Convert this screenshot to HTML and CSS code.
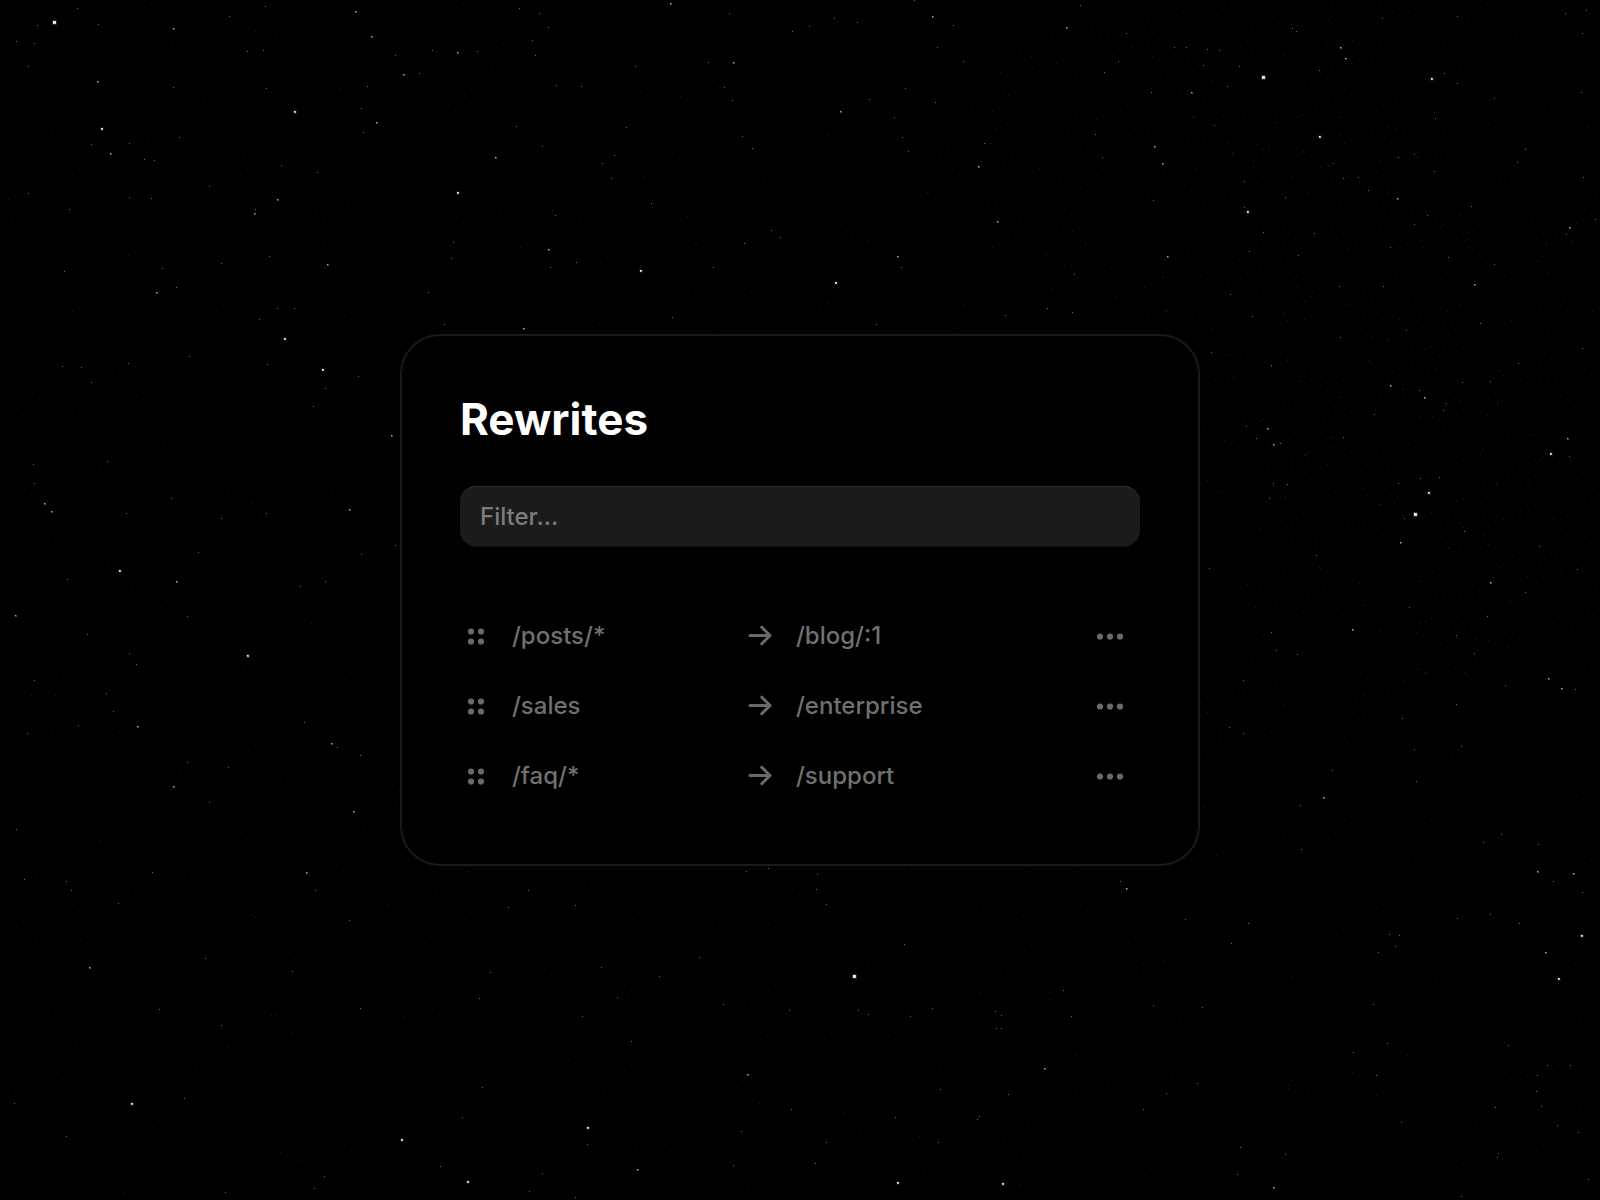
FILE: index.html
```html
<!DOCTYPE html>
<html lang="en">
<head>
    <meta charset="UTF-8">
    <meta name="viewport" content="width=device-width, initial-scale=1.0">
    <title>Rewrites</title>
    <link rel="stylesheet" href="styles.css">
</head>
<body>
    <svg class="sky" id="sky" viewBox="0 0 1600 1200" preserveAspectRatio="xMidYMid slice" aria-hidden="true"></svg>

    <!-- Shared icons -->
    <svg class="icon-defs" aria-hidden="true">
        <symbol id="icon-grip" viewBox="0 0 32 32">
            <circle cx="11" cy="11.5" r="3.1"/>
            <circle cx="21" cy="11.5" r="3.1"/>
            <circle cx="11" cy="21.5" r="3.1"/>
            <circle cx="21" cy="21.5" r="3.1"/>
        </symbol>
        <symbol id="icon-arrow" viewBox="0 0 32 32">
            <path d="M6 15.5H26M17.8 7.2L26 15.5L17.8 23.8" fill="none" stroke="currentColor" stroke-width="3" stroke-linecap="round" stroke-linejoin="round"/>
        </symbol>
        <symbol id="icon-more" viewBox="0 0 32 32">
            <circle cx="6" cy="16.5" r="3.1"/>
            <circle cx="16" cy="16.5" r="3.1"/>
            <circle cx="26" cy="16.5" r="3.1"/>
        </symbol>
    </svg>

    <main class="card">
        <h1 class="title">Rewrites</h1>
        <input class="filter" type="text" placeholder="Filter..." aria-label="Filter">

        <ul class="rewrites">
            <li class="rewrite">
                <button class="grip" type="button" aria-label="Reorder"><svg class="icon"><use href="#icon-grip"/></svg></button>
                <span class="path">/posts/*</span>
                <svg class="icon" aria-hidden="true"><use href="#icon-arrow"/></svg>
                <span class="path">/blog/:1</span>
                <button class="more" type="button" aria-label="More"><svg class="icon"><use href="#icon-more"/></svg></button>
            </li>
            <li class="rewrite">
                <button class="grip" type="button" aria-label="Reorder"><svg class="icon"><use href="#icon-grip"/></svg></button>
                <span class="path">/sales</span>
                <svg class="icon" aria-hidden="true"><use href="#icon-arrow"/></svg>
                <span class="path">/enterprise</span>
                <button class="more" type="button" aria-label="More"><svg class="icon"><use href="#icon-more"/></svg></button>
            </li>
            <li class="rewrite">
                <button class="grip" type="button" aria-label="Reorder"><svg class="icon"><use href="#icon-grip"/></svg></button>
                <span class="path">/faq/*</span>
                <svg class="icon" aria-hidden="true"><use href="#icon-arrow"/></svg>
                <span class="path">/support</span>
                <button class="more" type="button" aria-label="More"><svg class="icon"><use href="#icon-more"/></svg></button>
            </li>
        </ul>
    </main>

    <script src="stars.js"></script>
</body>
</html>
```
FILE: styles.css
```css
* {
    box-sizing: border-box;
}
body {
    margin: 0;
    padding: 24px;
    min-height: 100vh;
    display: flex;
    align-items: center;
    justify-content: center;
    background-color: #000;
    color: #707070;
    font-family: Inter, "Liberation Sans", sans-serif;
    font-size: 24px;
}
.sky {
    position: fixed;
    inset: 0;
    width: 100%;
    height: 100%;
    z-index: -1;
}
.icon-defs {
    position: absolute;
    width: 0;
    height: 0;
}
.card {
    width: 100%;
    max-width: 800px;
    padding: 55px 58px 53px;
    border: 2px solid #1a1a1a;
    border-radius: 40px;
    background-color: #000;
}
.title {
    margin: 0 0 39px;
    color: #fff;
    font-size: 44px;
    font-weight: 700;
    line-height: 56px;
}
.filter {
    display: block;
    width: 100%;
    height: 60px;
    padding: 0 20px;
    border: none;
    border-radius: 16px;
    background-color: #1b1b1b;
    box-shadow: inset 0 1px 0 #2a2a2a, 0 1px 0 #121212;
    color: #fff;
    font-family: inherit;
    font-size: 24px;
    font-weight: 500;
    outline: none;
}
.filter::placeholder {
    color: #7c7c7c;
    opacity: 1;
}
.rewrites {
    margin: 55px 0 0;
    padding: 0;
    list-style: none;
}
.rewrite {
    display: grid;
    grid-template-columns: 32px 1fr 32px 1fr 112px;
    column-gap: 20px;
    align-items: center;
    height: 70px;
}
.path {
    font-weight: 500;
    line-height: 32px;
    white-space: nowrap;
}
.icon {
    display: block;
    width: 32px;
    height: 32px;
    color: #6a6a6a;
    fill: currentColor;
}
.grip, .more {
    display: flex;
    align-items: center;
    justify-content: center;
    padding: 0;
    border: none;
    background: none;
    cursor: pointer;
}
.more {
    justify-self: end;
    width: 60px;
}
```
FILE: stars.js
```js
// x, y pairs on a 1600x1200 sky, grouped from brightest to faintest
const stars = {
    huge: [54,22, 1263,77, 1415,514, 854,976],
    bright: [295,112, 102,129, 458,193, 641,271, 285,339, 1320,137, 1432,79, 1248,212, 836,283, 1429,493, 323,370, 120,571, 248,656, 588,1128, 132,1104, 402,1140, 468,1182, 1582,936, 1559,979, 898,1183, 1003,1184, 1551,454],
    medium: [174,29, 356,12, 372,37, 98,82, 111,154, 377,123, 404,75, 458,53, 496,158, 734,63, 549,250, 278,200, 328,265, 157,293, 933,17, 841,112, 1067,28, 1192,93, 1341,48, 1346,59, 1163,164, 979,167, 898,257, 1168,257, 1398,199, 1570,228, 1475,285, 1391,386, 1425,398, 1268,429, 1274,445, 1568,439, 1401,543, 1491,583, 1353,630, 1549,679, 1562,689, 392,436, 45,504, 52,512, 350,510, 177,582, 16,616, 138,727, 332,744, 174,787, 354,812, 1324,798, 1538,872, 90,968, 307,873, 638,1170, 748,1075, 1127,889, 1574,874, 1546,953, 1045,1069, 1274,1188, 671,4, 255,214, 524,329, 1155,147, 998,222],
    dim: [17,42, 35,44, 38,26, 99,25, 78,9, 266,7, 230,17, 248,52, 264,51, 155,161, 145,160, 130,144, 180,138, 92,145, 174,88, 267,89, 364,133, 362,109, 368,87, 420,74, 396,56, 433,51, 478,52, 520,9, 540,14, 533,41, 536,56, 549,28, 557,86, 582,87, 517,127, 543,147, 615,156, 612,179, 603,164, 556,216, 730,14, 709,63, 725,88, 733,101, 793,32, 636,67, 627,128, 743,137, 753,149, 551,268, 577,263, 652,204, 714,268, 745,244, 772,231, 781,238, 256,210, 270,257, 177,288, 163,269, 65,272, 222,264, 152,199, 130,198, 70,210, 29,194, 429,293, 452,259, 454,243, 445,325, 673,318, 278,309, 295,309, 260,320, 210,187, 282,166, 29,67, 318,173,
        915,1, 835,19, 810,27, 858,23, 954,26, 938,48, 964,62, 906,89, 870,100, 936,103, 895,118, 1081,6, 1127,34, 1105,73, 1119,62, 1175,48, 1187,48, 1208,50, 1220,51, 1204,66, 1240,67, 1228,87, 1152,93, 1297,32, 1293,29, 1320,71, 1458,17, 1383,19, 1566,14, 1587,11, 1583,34, 1582,93, 1458,84, 1445,74, 1215,126, 985,144, 1103,158, 1096,135, 903,138, 909,152, 1245,182, 1245,208, 1154,201, 902,268, 1006,316, 877,325, 1073,313, 1048,309, 1075,275, 1250,252, 1264,233, 1299,256, 1286,198, 1315,234, 1415,225, 1428,216, 1334,164, 1415,155, 1399,158, 1435,172, 1518,163, 1526,150, 1359,178, 1344,179, 1369,191, 1584,178, 1596,220, 1567,235, 1384,287, 1340,287, 1231,295, 1495,265, 1449,258, 1481,324, 1407,331, 1341,338, 1253,317, 1436,119, 1495,99, 1472,207, 1391,248,
        1447,404, 1444,411, 1420,391, 1247,427, 1281,444, 1257,439, 1272,366, 1212,353, 1344,438, 1375,415, 1583,349, 1519,364, 1491,382, 1463,383, 1570,457, 1288,485, 1274,484, 1270,499, 1465,532, 1405,519, 1421,479, 1440,478, 1399,484, 1410,608, 1272,633, 1277,651, 1298,655, 1457,636, 1475,654, 1488,617, 1576,690, 1578,570, 1244,681, 1244,734, 1230,728, 1317,556, 1210,569, 1457,705, 1462,747, 1403,719, 1526,593, 1540,547, 1415,750, 1506,686, 1333,771, 1417,782, 1301,806, 1502,835, 1539,845, 1484,843, 1302,850,
        326,389, 129,364, 92,383, 63,367, 82,368, 190,357, 314,407, 268,365, 359,377, 34,465, 35,484, 108,462, 172,499, 127,514, 222,519, 267,514, 362,555, 396,546, 199,553, 68,580, 301,587, 326,582, 188,617, 88,635, 130,654, 137,665, 35,681, 107,694, 79,726, 28,734, 338,748, 361,756, 188,763, 229,768, 210,803, 17,830, 114,712, 305,723,
        588,1145, 67,882, 25,880, 72,891, 119,904, 153,873, 316,891, 350,921, 206,959, 293,972, 222,1026, 160,1010, 185,1099, 15,1104, 67,1137, 226,1193, 315,1189, 325,1177, 543,1174, 463,1118, 491,973, 529,891, 509,908, 576,906, 700,958, 769,869, 747,872, 602,968, 660,977, 583,1017, 632,1042, 618,998, 790,1011, 724,1005, 742,1132, 734,1166, 483,1088, 441,1167, 361,1009, 480,999, 576,1198, 530,1192, 792,1110,
        818,875, 817,890, 827,905, 905,945, 1121,882, 1186,920, 1249,924, 1232,944, 1390,935, 1400,936, 1396,947, 1379,953, 1554,882, 1583,893, 1491,915, 1520,924, 1458,919, 859,1011, 869,1015, 933,1009, 911,1017, 996,1012, 1002,1016, 997,1029, 1002,1029, 1064,991, 1072,1017, 1154,1006, 1203,1008, 1009,1095, 941,1090, 896,1118, 939,1143, 978,1120, 980,1117, 827,1143, 816,1164, 1388,1044, 1377,1076, 1374,1005, 1402,1123, 1496,1108, 1499,1154, 1498,1158, 1538,1076, 1548,1066, 1571,1066, 1542,1107, 1558,1126, 1537,1092, 1198,1084, 1167,1094, 1144,1110, 1241,1148, 1286,1155, 1238,1175, 1462,1197, 1589,1180, 1579,1133, 1354,1053, 1509,1046]
};

const sky = document.getElementById('sky');

// One path per brightness keeps the node count low.
// Squares start one unit up and left of the star's point.
function addStars(points, size, color) {
    let d = '';
    for (let i = 0; i < points.length; i += 2) {
        d += `M${points[i] - 1} ${points[i + 1] - 1}h${size}v${size}h-${size}z`;
    }
    const path = document.createElementNS('http://www.w3.org/2000/svg', 'path');
    path.setAttribute('d', d);
    path.setAttribute('fill', color);
    sky.appendChild(path);
}

// Faint square behind the larger stars
function addGlow(points, size, color) {
    const shifted = points.map(p => p - 1);
    addStars(shifted, size, color);
}

// Small seeded generator, so the dust is the same on every load
let seed = 7;
function random() {
    seed = (seed * 16807) % 2147483647;
    return seed / 2147483647;
}

const dust = [];
for (let i = 0; i < 1300; i++) {
    dust.push(Math.floor(random() * 1600), Math.floor(random() * 1200));
}
// Denser band on the right
for (let i = 0; i < 800; i++) {
    const t = random();
    const spread = (random() + random() + random() - 1.5) * 260;
    dust.push(Math.floor(1130 + t * 430 + spread), Math.floor(t * 640 - spread / 2));
}

addStars(dust.slice(0, 1400), 1, '#161616');
addStars(dust.slice(1400), 1, '#222222');
addStars(stars.dim, 1, '#6c6c6c');
addStars(stars.medium, 2, '#484848');
addStars(stars.medium, 1, '#b4b4b4');
addGlow(stars.bright, 4, '#161618');
addStars(stars.bright, 2, '#b4b4ba');
addStars(stars.bright, 1, '#ffffff');
addGlow(stars.huge, 5, '#26262e');
addStars(stars.huge, 3, '#d8d8e4');
addStars(stars.huge, 2, '#ffffff');
```
